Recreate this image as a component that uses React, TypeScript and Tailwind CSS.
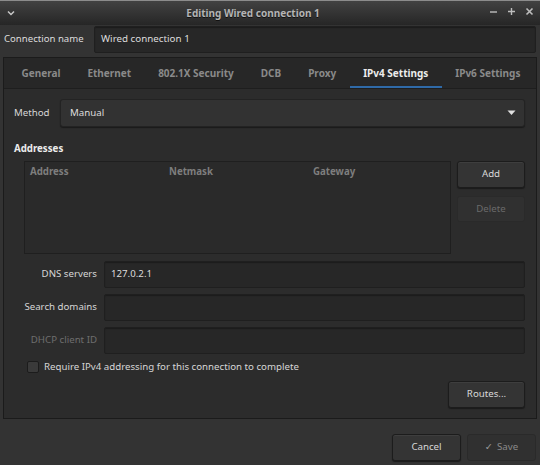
import React from "react";

const font = { fontFamily: '"Noto Sans", "DejaVu Sans", sans-serif' };

function Btn({ children, disabled, className = "" }: { children: React.ReactNode; disabled?: boolean; className?: string }) {
  return (
    <div
      className={
        "flex items-center justify-center rounded-[3px] border " +
        (disabled
          ? "border-[#2a2a2a] bg-[#303030] text-[#6a6a6a] "
          : "border-[#1c1c1c] bg-[#343434] text-[#d8d8d8] shadow-[inset_0_1px_0_#3e3e3e,0_1px_1px_#1a1a1a] ") +
        className
      }
    >
      {children}
    </div>
  );
}

function Entry({ children, className = "" }: { children?: React.ReactNode; className?: string }) {
  return (
    <div className={"flex items-center rounded-[2px] border border-[#1f1f1f] bg-[#272727] px-[6px] text-[#dcdcdc] shadow-[inset_0_1px_1px_#1c1c1c] " + className}>
      {children}
    </div>
  );
}

const tabs = ["General", "Ethernet", "802.1X Security", "DCB", "Proxy", "IPv4 Settings", "IPv6 Settings"];

export default function App() {
  return (
    <div style={font} className="flex h-[465px] w-[540px] flex-col overflow-hidden bg-[#333333] text-[9.7px] text-[#d6d6d6]">
      {/* title bar */}
      <div className="relative flex h-[25px] shrink-0 items-center border-t border-[#8c8c8c] bg-gradient-to-b from-[#424242] to-[#262626]">
        <svg className="absolute left-[7px] top-[9px]" width="8" height="6" viewBox="0 0 8 6">
          <path d="M1 1.5 L4 4.5 L7 1.5" stroke="#c8c8c8" strokeWidth="1.5" fill="none" />
        </svg>
        <div className="w-full pr-[34px] text-center text-[10px] font-bold text-[#b4b4b4] [text-shadow:0_1px_0_#111]">Editing Wired connection 1</div>
        <div className="absolute right-[6px] top-[6px] flex items-center gap-[9px]">
          <svg width="9" height="9" viewBox="0 0 9 9"><path d="M1 5 H8" stroke="#bdbdbd" strokeWidth="1.4" /></svg>
          <svg width="9" height="9" viewBox="0 0 9 9"><path d="M1 4.5 H8 M4.5 1 V8" stroke="#bdbdbd" strokeWidth="1.4" /></svg>
          <svg width="9" height="9" viewBox="0 0 9 9"><path d="M1.5 1.5 L7.5 7.5 M7.5 1.5 L1.5 7.5" stroke="#bdbdbd" strokeWidth="1.6" /></svg>
        </div>
      </div>

      {/* connection name */}
      <div className="mt-[1px] flex h-[27px] shrink-0 items-center">
        <div className="w-[94px] shrink-0 pl-[4px] text-[9.6px] text-[#dcdcdc]">Connection name</div>
        <Entry className="mr-[4px] h-[27px] flex-1 text-[9.8px]">Wired connection 1</Entry>
      </div>

      {/* notebook */}
      <div className="ml-[3px] mr-[3px] mt-[4px] flex h-[362px] shrink-0 flex-col border border-[#1b1b1b] bg-[#2c2c2c]">
        <div className="flex h-[31px] shrink-0 items-stretch border-b border-[#1e1e1e] bg-[#272727] pl-[4px]">
          {tabs.map((t) => {
            const active = t === "IPv4 Settings";
            return (
              <div
                key={t}
                className={
                  "flex items-center px-[13.5px] text-[10px] font-bold " +
                  (active ? "border-b-2 border-[#2f6aa8] pt-[2px] text-[#ececec]" : "text-[#8a8a8a]")
                }
              >
                {t}
              </div>
            );
          })}
        </div>

        <div className="flex flex-1 flex-col pl-[10px] pr-[11px] pt-[10px]">
          {/* method */}
          <div className="flex h-[28px] items-center">
            <div className="w-[46px] shrink-0 text-[#d6d6d6]">Method</div>
            <div className="flex h-[28px] flex-1 items-center justify-between rounded-[3px] border border-[#232323] bg-[#323232] pl-[9px] pr-[8px] shadow-[0_1px_1px_#1a1a1a]">
              <span className="text-[#dedede]">Manual</span>
              <svg width="9" height="6" viewBox="0 0 9 6"><path d="M0.5 0.5 H8.5 L4.5 5 Z" fill="#e0e0e0" /></svg>
            </div>
          </div>

          {/* addresses */}
          <div className="mt-[15px] h-[14px] font-bold text-[#ececec]">Addresses</div>
          <div className="mt-[5px] flex">
            <div className="ml-[10px] h-[93px] w-[427px] border border-[#1f1f1f] bg-[#2a2a2a]">
              <div className="flex h-[20px] items-center font-bold text-[#7e7e7e]">
                <div className="w-[139px] pl-[5px]">Address</div>
                <div className="w-[144px] pl-[5px]">Netmask</div>
                <div className="pl-[5px]">Gateway</div>
              </div>
            </div>
            <div className="ml-[6px] flex flex-1 flex-col gap-[8px]">
              <Btn className="h-[27px]">Add</Btn>
              <Btn disabled className="h-[26px]">Delete</Btn>
            </div>
          </div>

          {/* entries */}
          <div className="mt-[7px] flex flex-col gap-[6px]">
            {[
              ["DNS servers", "127.0.2.1", false],
              ["Search domains", "", false],
              ["DHCP client ID", "", true],
            ].map(([l, v, d]) => (
              <div key={l as string} className="flex h-[27px] items-center">
                <div className={"w-[84px] shrink-0 pr-[1px] text-right " + (d ? "text-[#6e6e6e]" : "text-[#d6d6d6]")}>{l}</div>
                <Entry className="ml-[6px] h-[27px] flex-1 bg-[#2a2a2a]">{v}</Entry>
              </div>
            ))}
          </div>

          {/* checkbox */}
          <div className="ml-[13px] mt-[6px] flex items-center gap-[5px]">
            <div className="h-[12px] w-[12px] rounded-[2px] border border-[#1c1c1c] bg-[#3a3a3a]" />
            <span className="text-[#d6d6d6]">Require IPv4 addressing for this connection to complete</span>
          </div>

          <div className="mt-[6px] flex justify-end">
            <Btn className="h-[27px] w-[77px]">Routes...</Btn>
          </div>
        </div>
      </div>

      {/* bottom buttons */}
      <div className="mt-[15px] flex justify-end gap-[6px] pr-[4px]">
        <Btn className="h-[27px] w-[69px]">Cancel</Btn>
        <Btn disabled className="h-[27px] w-[69px] gap-[4px] text-[#8a8a8a]">
          <span className="text-[#9a9a9a]">✓</span> Save
        </Btn>
      </div>
    </div>
  );
}
